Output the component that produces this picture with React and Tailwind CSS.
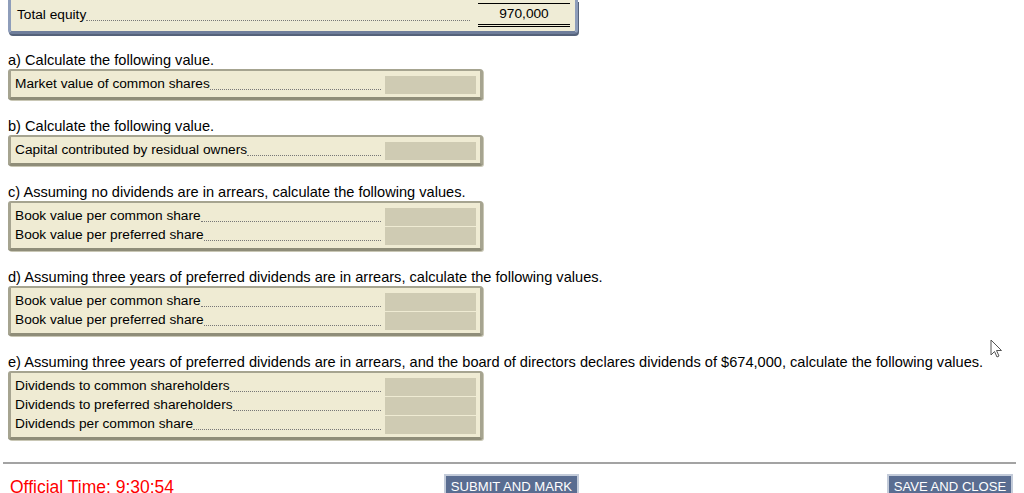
import React from "react";

const sections = [
  { label: "a) Calculate the following value.", rows: ["Market value of common shares"] },
  { label: "b) Calculate the following value.", rows: ["Capital contributed by residual owners"] },
  {
    label: "c) Assuming no dividends are in arrears, calculate the following values.",
    rows: ["Book value per common share", "Book value per preferred share"],
  },
  {
    label: "d) Assuming three years of preferred dividends are in arrears, calculate the following values.",
    rows: ["Book value per common share", "Book value per preferred share"],
  },
  {
    label:
      "e) Assuming three years of preferred dividends are in arrears, and the board of directors declares dividends of $674,000, calculate the following values.",
    rows: [
      "Dividends to common shareholders",
      "Dividends to preferred shareholders",
      "Dividends per common share",
    ],
  },
];

const AnswerRow = ({ text }) => (
  <div className="flex items-center h-[19px] text-[13.7px]">
    <span className="whitespace-nowrap">{text}</span>
    <div className="flex-1 self-end mb-[4px] border-b border-dotted border-[#777]" />
    <div className="ml-[4px] w-[91px] h-[18px] bg-[#cfcbb3]" />
  </div>
);

const Section = ({ label, rows }) => (
  <div className="mt-[18px]">
    <div className="text-[14.6px] leading-[17px] whitespace-nowrap">{label}</div>
    <div className="w-[475px] bg-[#efebd3] border-[3px] border-t-2 border-[#a6a490] border-b-[#8f8d79] rounded-[3px] pl-[4px] pr-[4px] pt-[4px] pb-[3px] shadow-[1px_1px_0_#c9c7b5]">
      {rows.map((r, i) => (
        <AnswerRow key={i} text={r} />
      ))}
    </div>
  </div>
);

export default function App() {
  return (
    <div
      className="relative w-[1024px] h-[493px] overflow-hidden bg-white text-black"
      style={{ fontFamily: '"Liberation Sans", Arial, sans-serif' }}
    >
      <div className="px-[8px]">
        {/* bottom of the equity table, scrolled off the top */}
        <div className="w-[570px] bg-[#efecd6] border-[3px] border-t-0 border-[#8e9dba] border-b-[#6f7e9b] rounded-b-[4px] shadow-[1px_2px_0_#55627a] pl-[6px] pr-[5px] pt-[3px] pb-[4px] text-[13.7px]">
          <div className="flex items-center h-[24px]">
            <span className="whitespace-nowrap">Total equity</span>
            <div className="flex-1 self-end mb-[6px] border-b border-dotted border-[#777]" />
            <div className="ml-[8px] w-[92px] h-[24px] border-t border-black border-b-[3px] border-b-black border-double flex items-center justify-center">
              970,000
            </div>
          </div>
        </div>

        {sections.map((s, i) => (
          <Section key={i} label={s.label} rows={s.rows} />
        ))}
      </div>

      <div className="mx-[3px] mt-[22px] w-[1013px] border-t-2 border-[#a3a3a3]" />

      <div className="grid grid-cols-3 items-start pl-[10px] pr-[11px] mt-[10px]">
        <div className="text-[17.5px] text-[#ff0000] leading-[20px] mt-[3px] whitespace-nowrap">
          Official Time: 9:30:54
        </div>
        <div className="justify-self-center">
          <button className="w-[135px] h-[24px] bg-[#5a6d91] border-2 border-[#c3cbd9] text-white text-[13.1px] leading-[18px] pt-[2px] uppercase whitespace-nowrap">
            Submit and Mark
          </button>
        </div>
        <div className="justify-self-end">
          <button className="w-[126px] h-[24px] bg-[#5a6d91] border-2 border-[#c3cbd9] text-white text-[13.1px] leading-[18px] pt-[2px] uppercase whitespace-nowrap">
            Save and Close
          </button>
        </div>
      </div>

      {/* mouse pointer */}
      <svg className="absolute left-[990px] top-[339px]" width="14" height="20" viewBox="0 0 14 20">
        <path d="M1 1 L1 16 L4.5 12.5 L7 18 L9 17 L6.5 11.5 L11.5 11.5 Z" fill="#fff" stroke="#555" strokeWidth="1" />
      </svg>
    </div>
  );
}
